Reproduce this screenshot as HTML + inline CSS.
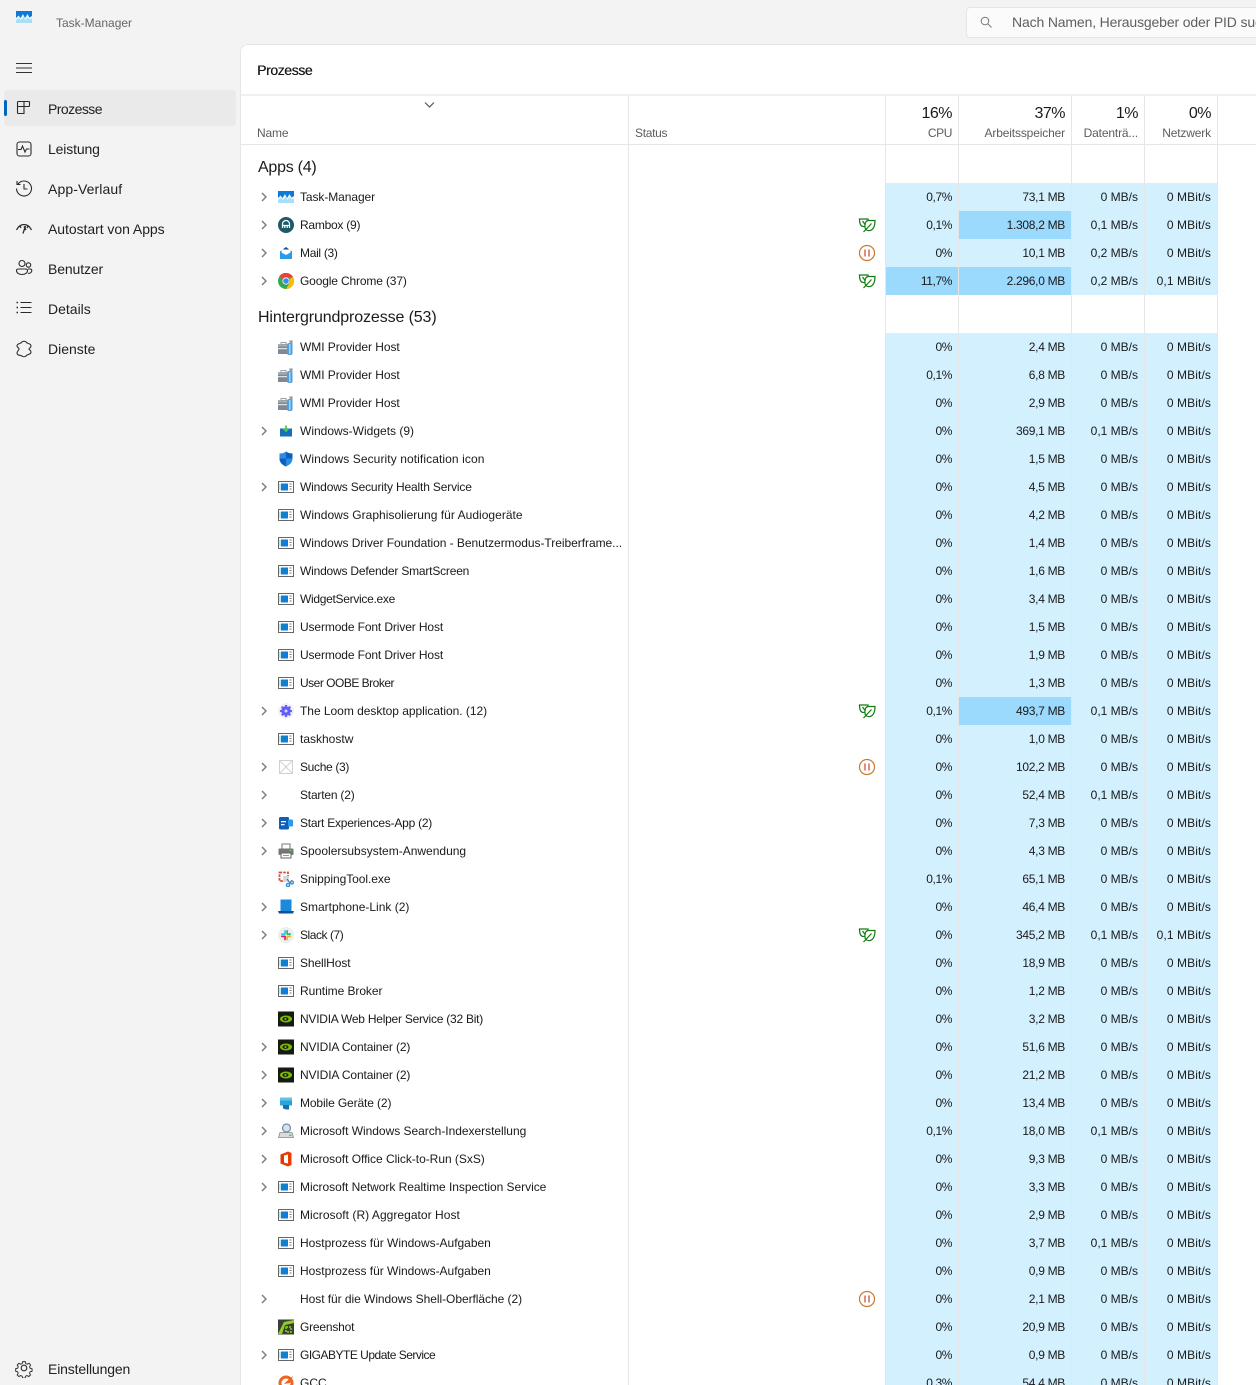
<!DOCTYPE html>
<html lang="de">
<head>
<meta charset="utf-8">
<title>Task-Manager</title>
<style>
html,body{margin:0;padding:0;width:1256px;height:1385px;overflow:hidden;background:#f3f3f3;font-family:"Liberation Sans",sans-serif;color:#1a1a1a}
#page{position:relative;width:1256px;height:1385px;overflow:hidden}
.abs{position:absolute;white-space:nowrap}
.nav{position:absolute;left:48px;font-size:14px;line-height:20px;color:#1f1f1f;white-space:nowrap}
.nv{position:absolute;left:14px;width:20px;height:20px;fill:none;stroke:#2b2b2b;stroke-width:1.1}
#main{position:absolute;left:240px;top:44px;width:1030px;height:1350px;background:#fff;border:1px solid #e6e6e6;border-top-left-radius:8px;box-sizing:border-box}
.vl{position:absolute;width:1px;background:#e6e6e6}
.r{position:absolute;left:0;width:1256px;height:28px;font-size:12px;line-height:28px;white-space:nowrap}
.r .e{position:absolute;left:259px;top:9px;width:10px;height:10px;fill:none;stroke:#7a7a7a;stroke-width:1.4}
.r .i{position:absolute;left:278px;top:6px;width:16px;height:16px}
.r .n{position:absolute;left:300px}
.r .s{position:absolute;left:857.500px;top:5px;width:18px;height:18px}
.r span.c,.r span.m,.r span.d,.r span.w{position:absolute;top:0;height:28px;text-align:right;background:#d3f0ff;box-sizing:border-box;padding-right:6px}
.r .c{left:886px;width:72px;letter-spacing:-.4px}
.r .m{left:959px;width:112px;letter-spacing:-.3px}
.r .d{left:1072px;width:72px}
.r .w{left:1145px;width:72px;letter-spacing:.1px}
.r span.h{background:#9bd9fd}
.hp{position:absolute;font-size:16px;line-height:20px;top:104px;text-align:right;color:#1a1a1a;white-space:nowrap;letter-spacing:-.5px}
.hl{position:absolute;font-size:12px;line-height:16px;top:125px;color:#5d5d5d;text-align:right;white-space:nowrap;letter-spacing:-.15px}
.g{position:absolute;left:258px;font-size:16px;line-height:20px;color:#1a1a1a;white-space:nowrap;letter-spacing:-.12px}
</style>
</head>
<body>
<div id="page">
<svg width="0" height="0" style="position:absolute">
<defs>
<symbol id="e" viewBox="0 0 10 10"><path d="M3 1l4 4-4 4"/></symbol>
<symbol id="tm" viewBox="0 0 16 16"><rect y="2" width="16" height="12" fill="#a6dff8"/><path d="M0 9l2.500-2.500L4.500 9l2.500-4 2 4 2.500-4 2 3.500L16 7v2.500l-2.500 1-2-2-2 2.500-2-3-2.500 3-2-2L0 11z" fill="#e8f7fe"/><path d="M0 2h16v5l-2.500 1.500-2-3.500L9 9 7 5 4.500 9 2.500 6.500 0 9z" fill="#1079d6"/></symbol>
<symbol id="svc" viewBox="0 0 16 16"><rect x=".5" y="2.500" width="15" height="11" fill="#fff" stroke="#666"/><rect x="3" y="4.500" width="7" height="7" fill="#0f7fd6"/><rect x="1.500" y="5" width="1" height="6" fill="#8cc"/><rect x="11.500" y="4.500" width="2" height="1" fill="#777"/><rect x="11.500" y="7" width="2" height="1" fill="#777"/><rect x="11.500" y="9.500" width="2" height="1" fill="#777"/></symbol>
<symbol id="wmi" viewBox="0 0 16 16"><rect x="0" y="5" width="11" height="10" fill="#7d8a96"/><rect x="0" y="5" width="11" height="2.500" fill="#a3adb6"/><rect x="0" y="9" width="11" height="1.200" fill="#dde1e5"/><rect x="3" y="3.500" width="5" height="2" fill="none" stroke="#98a1a9"/><rect x="9" y="4" width="5.500" height="12" rx="2" fill="#4f9fdd"/><rect x="11" y="5" width="1.500" height="10" fill="#a6d4f5"/><path d="M11 5l3.500-3.500M11.500 1.500l3 3" stroke="#9a9a9a" stroke-width="1.500" fill="none"/></symbol>
<symbol id="rb" viewBox="0 0 16 16"><circle cx="8" cy="8" r="8" fill="#1d5a68"/><path d="M4.500 11V7a3.500 3.500 0 017 0v4M4.500 8.500h7M6.800 8.500V11M9.200 8.500V11" fill="none" stroke="#fff" stroke-width="1.200"/></symbol>
<symbol id="mail" viewBox="0 0 16 16"><path d="M8 2l6 4.500H2z" fill="#0a4f96"/><rect x="2" y="6" width="12" height="8" fill="#2b9be8"/><path d="M3.500 4.500h9v3L8 10 3.500 7.500z" fill="#fff"/></symbol>
<symbol id="chrome" viewBox="0 0 16 16"><circle cx="8" cy="8" r="8" fill="#34a853"/><path d="M8 0a8 8 0 017 4H8a4 4 0 00-3.500 2L1.500 3A8 8 0 018 0z" fill="#ea4335"/><path d="M15 4a8 8 0 01-7 12l3.500-6A4 4 0 0011.500 6z" fill="#fbbc05"/><circle cx="8" cy="8" r="3.600" fill="#fff"/><circle cx="8" cy="8" r="2.800" fill="#4285f4"/></symbol>
<symbol id="wid" viewBox="0 0 16 16"><rect x="2" y="5.500" width="12" height="8" fill="#1570b8"/><path d="M8 2.500v5M5.800 5.500L8 8l2.200-2.500" fill="none" stroke="#4cc35a" stroke-width="1.800"/></symbol>
<symbol id="sh" viewBox="0 0 16 16"><path d="M8 .5c2 1.500 4 2 6.500 2v5c0 4-3 6.500-6.500 8-3.500-1.500-6.500-4-6.500-8v-5C4 2.500 6 2 8 .5z" fill="#2a8be6"/><path d="M8 .5c2 1.500 4 2 6.500 2v5H8zM8 7.500v8c-3.500-1.500-6.500-4-6.500-8z" fill="#0b5fbd"/></symbol>
<symbol id="loom" viewBox="0 0 16 16"><circle cx="8" cy="8" r="8" fill="#f1f1f7"/><g fill="#625df5"><circle cx="8" cy="8" r="4.500"/><circle cx="8" cy="3.200" r="1.300"/><circle cx="8" cy="12.800" r="1.300"/><circle cx="3.200" cy="8" r="1.300"/><circle cx="12.800" cy="8" r="1.300"/><circle cx="4.600" cy="4.600" r="1.300"/><circle cx="11.400" cy="4.600" r="1.300"/><circle cx="4.600" cy="11.400" r="1.300"/><circle cx="11.400" cy="11.400" r="1.300"/></g><circle cx="8" cy="8" r="1.500" fill="#d8d7ff"/></symbol>
<symbol id="x" viewBox="0 0 16 16"><rect x="1.500" y="1.500" width="13" height="13" fill="#fff" stroke="#d0d0d0"/><path d="M1.500 1.500l13 13M14.500 1.500l-13 13" stroke="#d0d0d0"/></symbol>
<symbol id="se" viewBox="0 0 16 16"><rect x="1" y="2" width="10" height="12.500" rx="1.500" fill="#0f5fb8"/><rect x="10" y="4.500" width="5" height="7" rx="1" fill="#2b9be8"/><rect x="3" y="6" width="5" height="1.300" fill="#fff"/><rect x="3" y="9" width="3.500" height="1.300" fill="#fff"/></symbol>
<symbol id="pr" viewBox="0 0 16 16"><rect x="4" y="1" width="8" height="5" fill="#fff" stroke="#777"/><rect x=".5" y="5.500" width="15" height="6.500" rx="1" fill="#777"/><rect x="3" y="10" width="10" height="5" fill="#fff" stroke="#666"/><rect x="11.500" y="7" width="2" height="1" fill="#6fd36f"/><rect x="5" y="12" width="6" height="1" fill="#5aa5e0"/></symbol>
<symbol id="sn" viewBox="0 0 16 16"><rect x="1.500" y="1.500" width="8.500" height="8.500" fill="#fff" stroke="#d8452e" stroke-width="1.800" stroke-dasharray="2.500 1.200"/><rect x="5" y="5" width="6" height="6" fill="#d5d8dc"/><path d="M9 8l3 4 2-3" fill="none" stroke="#5a5a5a" stroke-width="1"/><circle cx="10" cy="14" r="1.600" fill="none" stroke="#2b8fdd" stroke-width="1.400"/><circle cx="14" cy="11.500" r="1.400" fill="none" stroke="#2b8fdd" stroke-width="1.400"/></symbol>
<symbol id="ph" viewBox="0 0 16 16"><rect x="2.500" y="0.500" width="11" height="12" fill="#1a8bdc"/><path d="M0 12h16l-1 2.500H1z" fill="#0b4f96"/></symbol>
<symbol id="sl" viewBox="0 0 16 16"><circle cx="8" cy="8" r="8" fill="#eee"/><rect x="3" y="6.300" width="4.500" height="1.700" rx=".8" fill="#36c5f0"/><rect x="6.200" y="3" width="1.700" height="4.500" rx=".8" fill="#36c5f0"/><rect x="8.300" y="3" width="1.700" height="4.500" rx=".8" fill="#2eb67d"/><rect x="8.500" y="6.300" width="4.500" height="1.700" rx=".8" fill="#2eb67d"/><rect x="8.500" y="8.500" width="4.500" height="1.700" rx=".8" fill="#ecb22e"/><rect x="8.300" y="8.800" width="1.700" height="4.500" rx=".8" fill="#ecb22e"/><rect x="3" y="8.500" width="4.500" height="1.700" rx=".8" fill="#e01e5a"/><rect x="6.200" y="8.800" width="1.700" height="4.500" rx=".8" fill="#e01e5a"/></symbol>
<symbol id="nv" viewBox="0 0 16 16"><rect y="0.500" width="16" height="15" fill="#161a12"/><ellipse cx="8" cy="8" rx="6" ry="3.500" fill="#76b900"/><ellipse cx="7.500" cy="8" rx="3" ry="1.900" fill="#161a12"/><circle cx="7.500" cy="8" r="1.100" fill="#76b900"/></symbol>
<symbol id="mo" viewBox="0 0 16 16"><path d="M2 2.500h12v8H2z" fill="#2ba3d6"/><path d="M5 10h6v4.500H8l-3-1z" fill="#1970b0"/><rect x="2" y="2.500" width="12" height="3" fill="#5cc4ea"/></symbol>
<symbol id="ix" viewBox="0 0 16 16"><path d="M2 9.500h12l1.500 5H.5z" fill="#d9dcdf" stroke="#888" stroke-width=".8"/><rect x="11" y="11.500" width="2.500" height="1.500" fill="#5cc85c"/><circle cx="8.500" cy="5" r="4" fill="#cfe4f7" stroke="#7a8a99" stroke-width="1.200"/></symbol>
<symbol id="of" viewBox="0 0 16 16"><path d="M2.500 3.500L10 .5l3.500 1.500v12L10 15.500 2.500 12.500z" fill="#eb3c00"/><path d="M6 4.500l4-1v9l-4-1z" fill="#fff"/><path d="M2.500 3.500l3.500 1v7l-3.500 1z" fill="#d83b01"/></symbol>
<symbol id="gs" viewBox="0 0 16 16"><rect y=".5" width="16" height="15" fill="#3a3f35"/><path d="M0 15L6 3l10-2v3L7 6l-3 9z" fill="#8fd11f"/><path d="M8 8h5v5H8z" fill="none" stroke="#8fd11f" stroke-width="1.500" stroke-dasharray="2 1"/></symbol>
<symbol id="gc" viewBox="0 0 16 16"><circle cx="8" cy="8" r="6" fill="none" stroke="#f0641e" stroke-width="3"/><path d="M6 9l3-3 6-5-3 7z" fill="#f0641e"/></symbol>
<symbol id="lf" viewBox="0 0 18 18"><g fill="#fff" stroke="#107c10" stroke-width="1.200"><path d="M1.500 3h8.500c.5 4-1 7.500-4.500 7.500C2.500 10.500 1.500 7 1.500 3z"/><path d="M17 4.500H10.500C7.500 4.500 6.500 8 7 11.500c.5 2.500 3 3.500 5 3 3.500-1 5-5 5-10z"/><path d="M5.500 16l8-8.500M4.500 5l3 4" fill="none"/></g></symbol>
<symbol id="pa" viewBox="0 0 18 18"><circle cx="9" cy="9" r="7.500" fill="#fff" stroke="#ca7a2e" stroke-width="1.200"/><path d="M7 5.500v7M11 5.500v7" stroke="#c2452d" stroke-width="1.200"/></symbol>
</defs>
</svg>

<svg class="abs" style="left:16px;top:9px" width="16" height="16"><use href="#tm"/></svg>
<div class="abs" style="left:56px;top:15px;font-size:12px;line-height:16px;color:#666">Task-Manager</div>

<div class="abs" style="left:965.500px;top:7px;width:320px;height:31px;background:#fbfbfb;border:1px solid #e5e5e5;border-radius:4px;box-sizing:border-box"></div>
<svg class="abs" style="left:980px;top:16px" width="12" height="12" fill="none" stroke="#777" stroke-width="1"><circle cx="5" cy="5" r="3.800"/><path d="M8 8l3.500 3.500"/></svg>
<div class="abs" style="left:1012px;top:13px;font-size:14px;line-height:18px;color:#5f5f5f;letter-spacing:-.15px">Nach Namen, Herausgeber oder PID suchen</div>

<svg class="abs" style="left:16px;top:62px" width="16" height="12" stroke="#333" stroke-width="1.100"><path d="M0 1.500h16M0 6h16M0 10.500h16"/></svg>

<div class="abs" style="left:4px;top:90px;width:232px;height:36px;background:#eaeaea;border-radius:4px"></div>
<div class="abs" style="left:4px;top:100px;width:3px;height:16px;background:#0067c0;border-radius:2px"></div>

<svg class="nv" style="top:98px" viewBox="0 0 20 20"><path d="M3.500 4.500a1 1 0 011-1h10.500a.8.8 0 01.5.500v3.500a1 1 0 01-1 1H3.500zM3.500 8.500h6.500v7H4.500a1 1 0 01-1-1zM10 3.500v12"/></svg>
<div class="nav" style="top:99px;letter-spacing:-.55px">Prozesse</div>
<svg class="nv" style="top:139px" viewBox="0 0 20 20"><rect x="3" y="3" width="14" height="14" rx="2.500"/><path d="M4 10.500h3l1.500-3.500 2.500 6 1.500-3h3"/></svg>
<div class="nav" style="top:139px;letter-spacing:-.15px">Leistung</div>
<svg class="nv" style="top:178px" viewBox="0 0 20 20"><path d="M4 6a7.500 7.500 0 11-1.500 4.500M3 3v3.500h3.500M10 6v5h3.500"/></svg>
<div class="nav" style="top:179px;letter-spacing:.1px">App-Verlauf</div>
<svg class="nv" style="top:218px" viewBox="0 0 20 20"><path d="M2.500 12C4.500 8 7 6.500 10 6.500S15.500 8 17.500 12M11.500 8L9 15.500M10 8.500l2 3.500M6 8l1 2M14 8l-1 2" stroke-width="1.300"/></svg>
<div class="nav" style="top:219px;letter-spacing:-.05px">Autostart von Apps</div>
<svg class="nv" style="top:258px" viewBox="0 0 20 20"><circle cx="8" cy="5.500" r="3"/><circle cx="14.500" cy="7" r="2.200"/><path d="M2.500 12.500c0-1 1-1.500 2-1.500h7c1 0 2 .5 2 1.500 0 2.500-2.500 4-5.500 4s-5.500-1.500-5.500-4zM14 11h2c1 0 1.800.5 1.800 1.500 0 1.700-1.300 3-3.800 3"/></svg>
<div class="nav" style="top:259px;letter-spacing:-.12px">Benutzer</div>
<svg class="nv" style="top:298px" viewBox="0 0 20 20"><path d="M6.500 4.500h11M6.500 9.500h11M6.500 14.500h11" /><path d="M2.500 4.500h1.500M2.500 9.500h1.500M2.500 14.500h1.500" stroke-width="1.600"/></svg>
<div class="nav" style="top:299px">Details</div>
<svg class="nv" style="top:339px" viewBox="0 0 20 20"><path d="M8 3c0-1 4-1 4 0 1 2 5 1 5 4 0 2-2 2-2 3s2 1 2 3c0 3-4 2-5 4-1 1-3 1-4 0-1-1-5 0-5-3 0-2 2-2.500 2-4s-2-1.500-2-3c0-3 4-2 5-4z"/></svg>
<div class="nav" style="top:339px">Dienste</div>
<svg class="nv" style="top:1358px" viewBox="0 0 20 20"><circle cx="10" cy="10" r="2.800"/><path d="M8.500 2.500h3l.5 2.300 1.800.8 2-1.200 2 2.200-1.200 2 .6 1.700 2.300.7v2.800l-2.300.6-.7 1.700 1.200 2-2.100 2-2-1.200-1.700.7-.6 2.300h-3l-.5-2.300-1.800-.7-2 1.200-2-2 1.200-2-.8-1.800-2.200-.5v-3l2.300-.5.700-1.800-1.200-2 2.100-2.100 2 1.200 1.700-.7z" transform="translate(1.500 1.500) scale(.85)"/></svg>
<div class="nav" style="top:1359px;letter-spacing:-.15px">Einstellungen</div>

<div id="main"></div>
<div class="abs" style="left:257px;top:61px;font-size:14px;line-height:18px;color:#1a1a1a;letter-spacing:-.4px;text-shadow:.35px 0 0 #1a1a1a">Prozesse</div>
<div class="abs" style="left:241px;top:94px;width:1015px;height:2px;background:#f0f0f0"></div>
<div class="abs" style="left:241px;top:144px;width:1015px;height:1px;background:#e6e6e6"></div>

<svg class="abs" style="left:424px;top:101px" width="11" height="8" fill="none" stroke="#555" stroke-width="1.200"><path d="M1 1.500l4.500 4.500L10 1.500"/></svg>
<div class="hl" style="left:257px">Name</div>
<div class="hl" style="left:635px;letter-spacing:-.3px">Status</div>
<div class="hp" style="right:304px">16%</div><div class="hl" style="right:304px;letter-spacing:-.4px">CPU</div>
<div class="hp" style="right:191px">37%</div><div class="hl" style="right:191px">Arbeitsspeicher</div>
<div class="hp" style="right:118px">1%</div><div class="hl" style="right:118px">Datenträ...</div>
<div class="hp" style="right:45px">0%</div><div class="hl" style="right:45px">Netzwerk</div>

<div class="g" style="top:158px;letter-spacing:-.25px">Apps (4)</div>
<div class="g" style="top:308px">Hintergrundprozesse (53)</div>

<div class="r" style="top:183px"><svg class="e"><use href="#e"/></svg><svg class="i"><use href="#tm"/></svg><span class="n" style="letter-spacing:-.08px">Task-Manager</span><span class="c">0,7%</span><span class="m">73,1 MB</span><span class="d">0 MB/s</span><span class="w">0 MBit/s</span></div>
<div class="r" style="top:211px"><svg class="e"><use href="#e"/></svg><svg class="i"><use href="#rb"/></svg><span class="n" style="letter-spacing:-.25px">Rambox (9)</span><svg class="s"><use href="#lf"/></svg><span class="c">0,1%</span><span class="m h">1.308,2 MB</span><span class="d">0,1 MB/s</span><span class="w">0 MBit/s</span></div>
<div class="r" style="top:239px"><svg class="e"><use href="#e"/></svg><svg class="i"><use href="#mail"/></svg><span class="n" style="letter-spacing:-.3px">Mail (3)</span><svg class="s"><use href="#pa"/></svg><span class="c">0%</span><span class="m">10,1 MB</span><span class="d">0,2 MB/s</span><span class="w">0 MBit/s</span></div>
<div class="r" style="top:267px"><svg class="e"><use href="#e"/></svg><svg class="i"><use href="#chrome"/></svg><span class="n" style="letter-spacing:-.15px">Google Chrome (37)</span><svg class="s"><use href="#lf"/></svg><span class="c h">11,7%</span><span class="m h">2.296,0 MB</span><span class="d">0,2 MB/s</span><span class="w">0,1 MBit/s</span></div>

<div class="r" style="top:333px"><svg class="i"><use href="#wmi"/></svg><span class="n" style="letter-spacing:-.06px">WMI Provider Host</span><span class="c">0%</span><span class="m">2,4 MB</span><span class="d">0 MB/s</span><span class="w">0 MBit/s</span></div>
<div class="r" style="top:361px"><svg class="i"><use href="#wmi"/></svg><span class="n" style="letter-spacing:-.06px">WMI Provider Host</span><span class="c">0,1%</span><span class="m">6,8 MB</span><span class="d">0 MB/s</span><span class="w">0 MBit/s</span></div>
<div class="r" style="top:389px"><svg class="i"><use href="#wmi"/></svg><span class="n" style="letter-spacing:-.06px">WMI Provider Host</span><span class="c">0%</span><span class="m">2,9 MB</span><span class="d">0 MB/s</span><span class="w">0 MBit/s</span></div>
<div class="r" style="top:417px"><svg class="e"><use href="#e"/></svg><svg class="i"><use href="#wid"/></svg><span class="n">Windows-Widgets (9)</span><span class="c">0%</span><span class="m">369,1 MB</span><span class="d">0,1 MB/s</span><span class="w">0 MBit/s</span></div>
<div class="r" style="top:445px"><svg class="i"><use href="#sh"/></svg><span class="n" style="letter-spacing:.09px">Windows Security notification icon</span><span class="c">0%</span><span class="m">1,5 MB</span><span class="d">0 MB/s</span><span class="w">0 MBit/s</span></div>
<div class="r" style="top:473px"><svg class="e"><use href="#e"/></svg><svg class="i"><use href="#svc"/></svg><span class="n" style="letter-spacing:-.16px">Windows Security Health Service</span><span class="c">0%</span><span class="m">4,5 MB</span><span class="d">0 MB/s</span><span class="w">0 MBit/s</span></div>
<div class="r" style="top:501px"><svg class="i"><use href="#svc"/></svg><span class="n" style="letter-spacing:.03px">Windows Graphisolierung für Audiogeräte</span><span class="c">0%</span><span class="m">4,2 MB</span><span class="d">0 MB/s</span><span class="w">0 MBit/s</span></div>
<div class="r" style="top:529px"><svg class="i"><use href="#svc"/></svg><span class="n" style="letter-spacing:-.04px">Windows Driver Foundation - Benutzermodus-Treiberframe...</span><span class="c">0%</span><span class="m">1,4 MB</span><span class="d">0 MB/s</span><span class="w">0 MBit/s</span></div>
<div class="r" style="top:557px"><svg class="i"><use href="#svc"/></svg><span class="n" style="letter-spacing:-.2px">Windows Defender SmartScreen</span><span class="c">0%</span><span class="m">1,6 MB</span><span class="d">0 MB/s</span><span class="w">0 MBit/s</span></div>
<div class="r" style="top:585px"><svg class="i"><use href="#svc"/></svg><span class="n" style="letter-spacing:-.3px">WidgetService.exe</span><span class="c">0%</span><span class="m">3,4 MB</span><span class="d">0 MB/s</span><span class="w">0 MBit/s</span></div>
<div class="r" style="top:613px"><svg class="i"><use href="#svc"/></svg><span class="n" style="letter-spacing:-.12px">Usermode Font Driver Host</span><span class="c">0%</span><span class="m">1,5 MB</span><span class="d">0 MB/s</span><span class="w">0 MBit/s</span></div>
<div class="r" style="top:641px"><svg class="i"><use href="#svc"/></svg><span class="n" style="letter-spacing:-.12px">Usermode Font Driver Host</span><span class="c">0%</span><span class="m">1,9 MB</span><span class="d">0 MB/s</span><span class="w">0 MBit/s</span></div>
<div class="r" style="top:669px"><svg class="i"><use href="#svc"/></svg><span class="n" style="letter-spacing:-.5px">User OOBE Broker</span><span class="c">0%</span><span class="m">1,3 MB</span><span class="d">0 MB/s</span><span class="w">0 MBit/s</span></div>
<div class="r" style="top:697px"><svg class="e"><use href="#e"/></svg><svg class="i"><use href="#loom"/></svg><span class="n" style="letter-spacing:-.03px">The Loom desktop application. (12)</span><svg class="s"><use href="#lf"/></svg><span class="c">0,1%</span><span class="m h">493,7 MB</span><span class="d">0,1 MB/s</span><span class="w">0 MBit/s</span></div>
<div class="r" style="top:725px"><svg class="i"><use href="#svc"/></svg><span class="n">taskhostw</span><span class="c">0%</span><span class="m">1,0 MB</span><span class="d">0 MB/s</span><span class="w">0 MBit/s</span></div>
<div class="r" style="top:753px"><svg class="e"><use href="#e"/></svg><svg class="i"><use href="#x"/></svg><span class="n" style="letter-spacing:-.33px">Suche (3)</span><svg class="s"><use href="#pa"/></svg><span class="c">0%</span><span class="m">102,2 MB</span><span class="d">0 MB/s</span><span class="w">0 MBit/s</span></div>
<div class="r" style="top:781px"><svg class="e"><use href="#e"/></svg><span class="n" style="letter-spacing:-.2px">Starten (2)</span><span class="c">0%</span><span class="m">52,4 MB</span><span class="d">0,1 MB/s</span><span class="w">0 MBit/s</span></div>
<div class="r" style="top:809px"><svg class="e"><use href="#e"/></svg><svg class="i"><use href="#se"/></svg><span class="n" style="letter-spacing:-.24px">Start Experiences-App (2)</span><span class="c">0%</span><span class="m">7,3 MB</span><span class="d">0 MB/s</span><span class="w">0 MBit/s</span></div>
<div class="r" style="top:837px"><svg class="e"><use href="#e"/></svg><svg class="i"><use href="#pr"/></svg><span class="n">Spoolersubsystem-Anwendung</span><span class="c">0%</span><span class="m">4,3 MB</span><span class="d">0 MB/s</span><span class="w">0 MBit/s</span></div>
<div class="r" style="top:865px"><svg class="i"><use href="#sn"/></svg><span class="n" style="letter-spacing:-.06px">SnippingTool.exe</span><span class="c">0,1%</span><span class="m">65,1 MB</span><span class="d">0 MB/s</span><span class="w">0 MBit/s</span></div>
<div class="r" style="top:893px"><svg class="e"><use href="#e"/></svg><svg class="i"><use href="#ph"/></svg><span class="n">Smartphone-Link (2)</span><span class="c">0%</span><span class="m">46,4 MB</span><span class="d">0 MB/s</span><span class="w">0 MBit/s</span></div>
<div class="r" style="top:921px"><svg class="e"><use href="#e"/></svg><svg class="i"><use href="#sl"/></svg><span class="n" style="letter-spacing:-.45px">Slack (7)</span><svg class="s"><use href="#lf"/></svg><span class="c">0%</span><span class="m">345,2 MB</span><span class="d">0,1 MB/s</span><span class="w">0,1 MBit/s</span></div>
<div class="r" style="top:949px"><svg class="i"><use href="#svc"/></svg><span class="n" style="letter-spacing:-.1px">ShellHost</span><span class="c">0%</span><span class="m">18,9 MB</span><span class="d">0 MB/s</span><span class="w">0 MBit/s</span></div>
<div class="r" style="top:977px"><svg class="i"><use href="#svc"/></svg><span class="n" style="letter-spacing:-.07px">Runtime Broker</span><span class="c">0%</span><span class="m">1,2 MB</span><span class="d">0 MB/s</span><span class="w">0 MBit/s</span></div>
<div class="r" style="top:1005px"><svg class="i"><use href="#nv"/></svg><span class="n" style="letter-spacing:-.24px">NVIDIA Web Helper Service (32 Bit)</span><span class="c">0%</span><span class="m">3,2 MB</span><span class="d">0 MB/s</span><span class="w">0 MBit/s</span></div>
<div class="r" style="top:1033px"><svg class="e"><use href="#e"/></svg><svg class="i"><use href="#nv"/></svg><span class="n" style="letter-spacing:-.12px">NVIDIA Container (2)</span><span class="c">0%</span><span class="m">51,6 MB</span><span class="d">0 MB/s</span><span class="w">0 MBit/s</span></div>
<div class="r" style="top:1061px"><svg class="e"><use href="#e"/></svg><svg class="i"><use href="#nv"/></svg><span class="n" style="letter-spacing:-.12px">NVIDIA Container (2)</span><span class="c">0%</span><span class="m">21,2 MB</span><span class="d">0 MB/s</span><span class="w">0 MBit/s</span></div>
<div class="r" style="top:1089px"><svg class="e"><use href="#e"/></svg><svg class="i"><use href="#mo"/></svg><span class="n" style="letter-spacing:-.12px">Mobile Geräte (2)</span><span class="c">0%</span><span class="m">13,4 MB</span><span class="d">0 MB/s</span><span class="w">0 MBit/s</span></div>
<div class="r" style="top:1117px"><svg class="e"><use href="#e"/></svg><svg class="i"><use href="#ix"/></svg><span class="n" style="letter-spacing:-.03px">Microsoft Windows Search-Indexerstellung</span><span class="c">0,1%</span><span class="m">18,0 MB</span><span class="d">0,1 MB/s</span><span class="w">0 MBit/s</span></div>
<div class="r" style="top:1145px"><svg class="e"><use href="#e"/></svg><svg class="i"><use href="#of"/></svg><span class="n" style="letter-spacing:-.03px">Microsoft Office Click-to-Run (SxS)</span><span class="c">0%</span><span class="m">9,3 MB</span><span class="d">0 MB/s</span><span class="w">0 MBit/s</span></div>
<div class="r" style="top:1173px"><svg class="e"><use href="#e"/></svg><svg class="i"><use href="#svc"/></svg><span class="n" style="letter-spacing:-.04px">Microsoft Network Realtime Inspection Service</span><span class="c">0%</span><span class="m">3,3 MB</span><span class="d">0 MB/s</span><span class="w">0 MBit/s</span></div>
<div class="r" style="top:1201px"><svg class="i"><use href="#svc"/></svg><span class="n" style="letter-spacing:.04px">Microsoft (R) Aggregator Host</span><span class="c">0%</span><span class="m">2,9 MB</span><span class="d">0 MB/s</span><span class="w">0 MBit/s</span></div>
<div class="r" style="top:1229px"><svg class="i"><use href="#svc"/></svg><span class="n" style="letter-spacing:-.02px">Hostprozess für Windows-Aufgaben</span><span class="c">0%</span><span class="m">3,7 MB</span><span class="d">0,1 MB/s</span><span class="w">0 MBit/s</span></div>
<div class="r" style="top:1257px"><svg class="i"><use href="#svc"/></svg><span class="n" style="letter-spacing:-.02px">Hostprozess für Windows-Aufgaben</span><span class="c">0%</span><span class="m">0,9 MB</span><span class="d">0 MB/s</span><span class="w">0 MBit/s</span></div>
<div class="r" style="top:1285px"><svg class="e"><use href="#e"/></svg><span class="n" style="letter-spacing:-.05px">Host für die Windows Shell-Oberfläche (2)</span><svg class="s"><use href="#pa"/></svg><span class="c">0%</span><span class="m">2,1 MB</span><span class="d">0 MB/s</span><span class="w">0 MBit/s</span></div>
<div class="r" style="top:1313px"><svg class="i"><use href="#gs"/></svg><span class="n" style="letter-spacing:-.2px">Greenshot</span><span class="c">0%</span><span class="m">20,9 MB</span><span class="d">0 MB/s</span><span class="w">0 MBit/s</span></div>
<div class="r" style="top:1341px"><svg class="e"><use href="#e"/></svg><svg class="i"><use href="#svc"/></svg><span class="n" style="letter-spacing:-.5px">GIGABYTE Update Service</span><span class="c">0%</span><span class="m">0,9 MB</span><span class="d">0 MB/s</span><span class="w">0 MBit/s</span></div>
<div class="r" style="top:1369px"><svg class="i"><use href="#gc"/></svg><span class="n">GCC</span><span class="c">0,3%</span><span class="m">54,4 MB</span><span class="d">0 MB/s</span><span class="w">0 MBit/s</span></div>

<div class="vl" style="left:628px;top:96px;height:1289px"></div>
<div class="vl" style="left:885px;top:96px;height:1289px"></div>
<div class="vl" style="left:958px;top:96px;height:1289px"></div>
<div class="vl" style="left:1071px;top:96px;height:1289px"></div>
<div class="vl" style="left:1144px;top:96px;height:1289px"></div>
<div class="vl" style="left:1217px;top:96px;height:1289px"></div>
</div>
</body>
</html>
